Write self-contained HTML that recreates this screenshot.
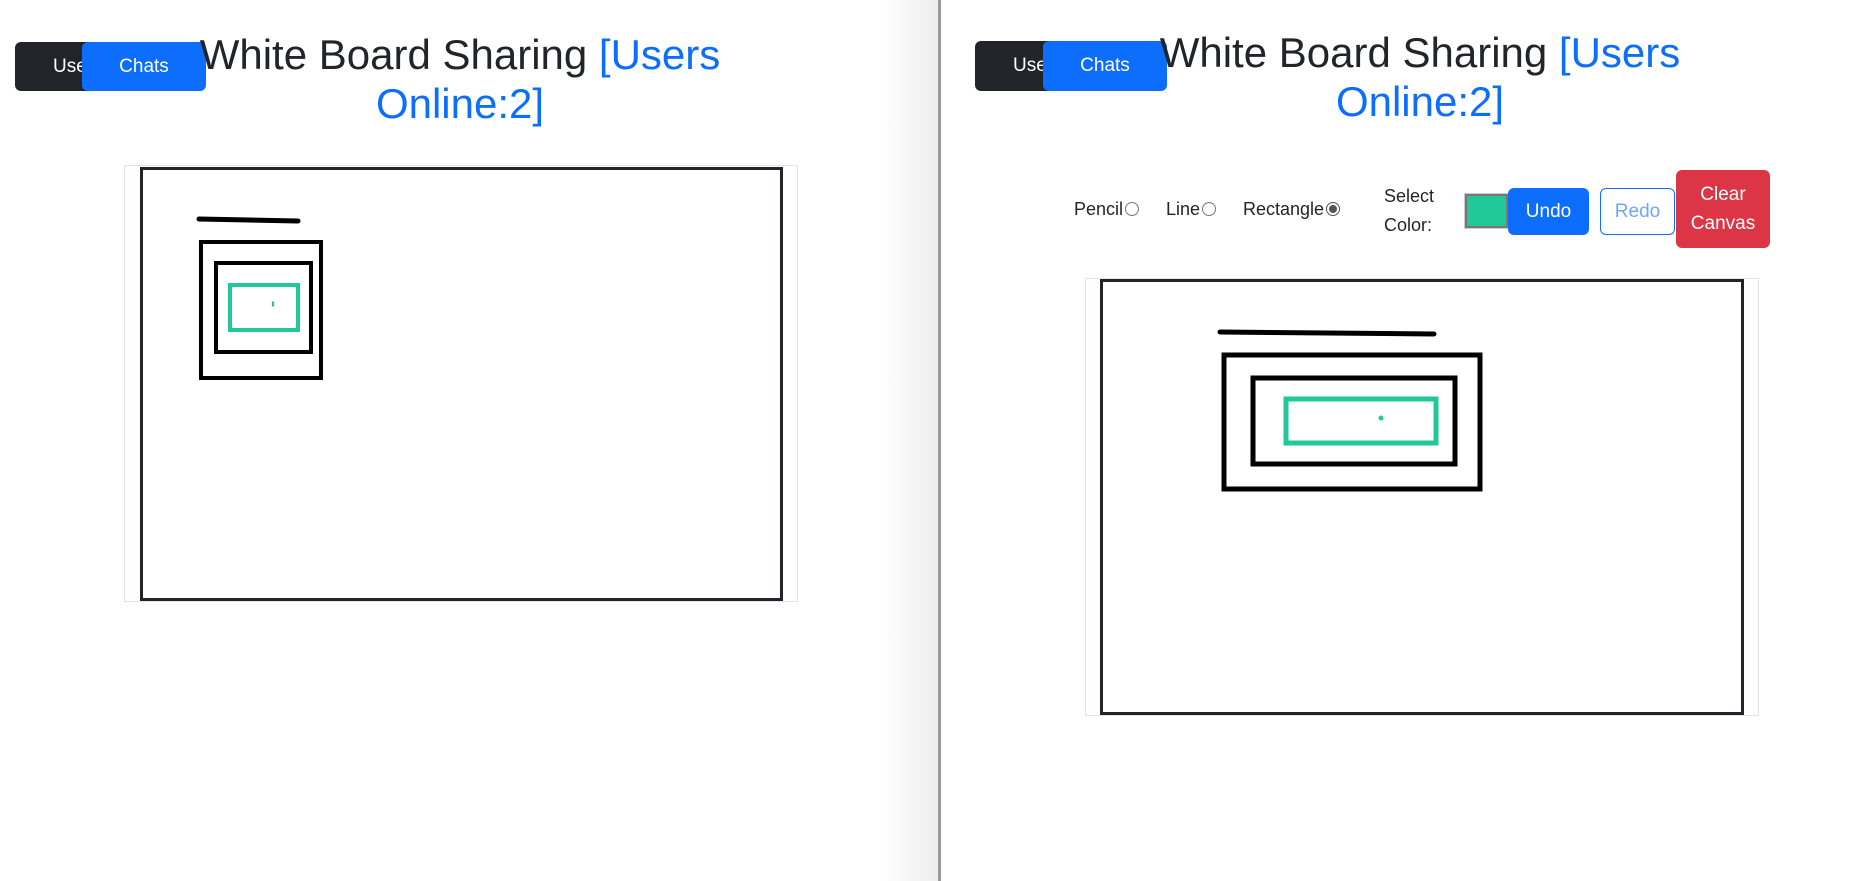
<!DOCTYPE html>
<html><head><meta charset="utf-8"><style>
*{margin:0;padding:0;box-sizing:border-box}
body{width:1870px;height:881px;background:#fff;position:relative;overflow:hidden;font-family:"Liberation Sans",sans-serif;color:#212529}
.a{position:absolute}
.btn{position:absolute;border-radius:6px;color:#fff;font-size:19px;display:flex;align-items:center;justify-content:center}
.dark{background:#212529;justify-content:flex-start;padding-left:38px}
.blue{background:#0d6efd}
.h1{position:absolute;font-size:42px;line-height:49px;text-align:center;font-weight:500}
.h1 span{color:#0d6efd}
.tb{position:absolute;font-size:18px;color:#212529}
.radio{display:inline-block;width:14px;height:14px;border:1px solid #767676;border-radius:50%;vertical-align:-1px;margin-left:2px;position:relative}
</style></head><body>
<!-- shadow / divider -->
<div class="a" style="left:880px;top:0;width:58px;height:881px;background:linear-gradient(to right,#fff,#eee)"></div>
<div class="a" style="left:938px;top:0;width:3px;height:881px;background:#9a9a9a"></div>

<!-- LEFT -->
<div class="btn dark" style="left:15px;top:42px;width:100px;height:49px">Use</div>
<div class="btn blue" style="left:82px;top:42px;width:124px;height:49px">Chats</div>
<div class="h1" style="left:140px;top:30px;width:640px">White Board Sharing <span>[Users Online:2]</span></div>
<div class="a" style="left:124px;top:165px;width:674px;height:437px;border:1px solid #e3e3e3"></div>
<div class="a" style="left:140px;top:167px;width:643px;height:434px;border:3px solid #212529;background:#fff"></div>
<svg class="a" style="left:0;top:0" width="940" height="881">
<line x1="199" y1="219" x2="298" y2="221" stroke="#000" stroke-width="5" stroke-linecap="round"/>
<rect x="201" y="242" width="120" height="136" fill="none" stroke="#000" stroke-width="4"/>
<rect x="216" y="263" width="95" height="89" fill="none" stroke="#000" stroke-width="4"/>
<rect x="230" y="285" width="68" height="45" fill="none" stroke="#20c997" stroke-width="4"/>
<ellipse cx="273" cy="304" rx="1.2" ry="3" fill="#20c997"/>
</svg>

<!-- RIGHT -->
<div class="btn dark" style="left:975px;top:41px;width:100px;height:50px">Use</div>
<div class="btn blue" style="left:1043px;top:41px;width:124px;height:50px">Chats</div>
<div class="h1" style="left:1105px;top:28px;width:630px">White Board Sharing <span>[Users Online:2]</span></div>

<div class="tb" style="left:1074px;top:199px">Pencil<span class="radio"></span></div>
<div class="tb" style="left:1166px;top:199px">Line<span class="radio"></span></div>
<div class="tb" style="left:1243px;top:199px">Rectangle<span class="radio" style="border-color:#555"><span style="position:absolute;left:2px;top:2px;width:8px;height:8px;border-radius:50%;background:#555"></span></span></div>
<div class="tb" style="left:1384px;top:182px;line-height:29px">Select<br>Color:</div>
<div class="a" style="left:1465px;top:194px;width:43px;height:34px;border:2px solid #777;background:#20c997;outline:1px solid #ccc"></div>
<div class="btn blue" style="left:1508px;top:188px;width:81px;height:47px;font-size:19px">Undo</div>
<div class="btn" style="left:1600px;top:188px;width:75px;height:47px;border:1px solid #0d6efd;color:#6ea8fe;font-size:19px">Redo</div>
<div class="btn" style="left:1676px;top:170px;width:94px;height:78px;background:#dc3545;line-height:29px;text-align:center;font-size:19px">Clear<br>Canvas</div>

<div class="a" style="left:1085px;top:278px;width:674px;height:438px;border:1px solid #e3e3e3"></div>
<div class="a" style="left:1100px;top:279px;width:644px;height:436px;border:3px solid #212529;background:#fff"></div>
<svg class="a" style="left:940px;top:0" width="930" height="881">
<line x1="280" y1="332" x2="494" y2="334" stroke="#000" stroke-width="5" stroke-linecap="round"/>
<rect x="284" y="355" width="256" height="134" fill="none" stroke="#000" stroke-width="5"/>
<rect x="313" y="378" width="202" height="86" fill="none" stroke="#000" stroke-width="5"/>
<rect x="346" y="399" width="150" height="44" fill="none" stroke="#20c997" stroke-width="5"/>
<circle cx="441" cy="418" r="2.5" fill="#20c997"/>
</svg>
</body></html>
